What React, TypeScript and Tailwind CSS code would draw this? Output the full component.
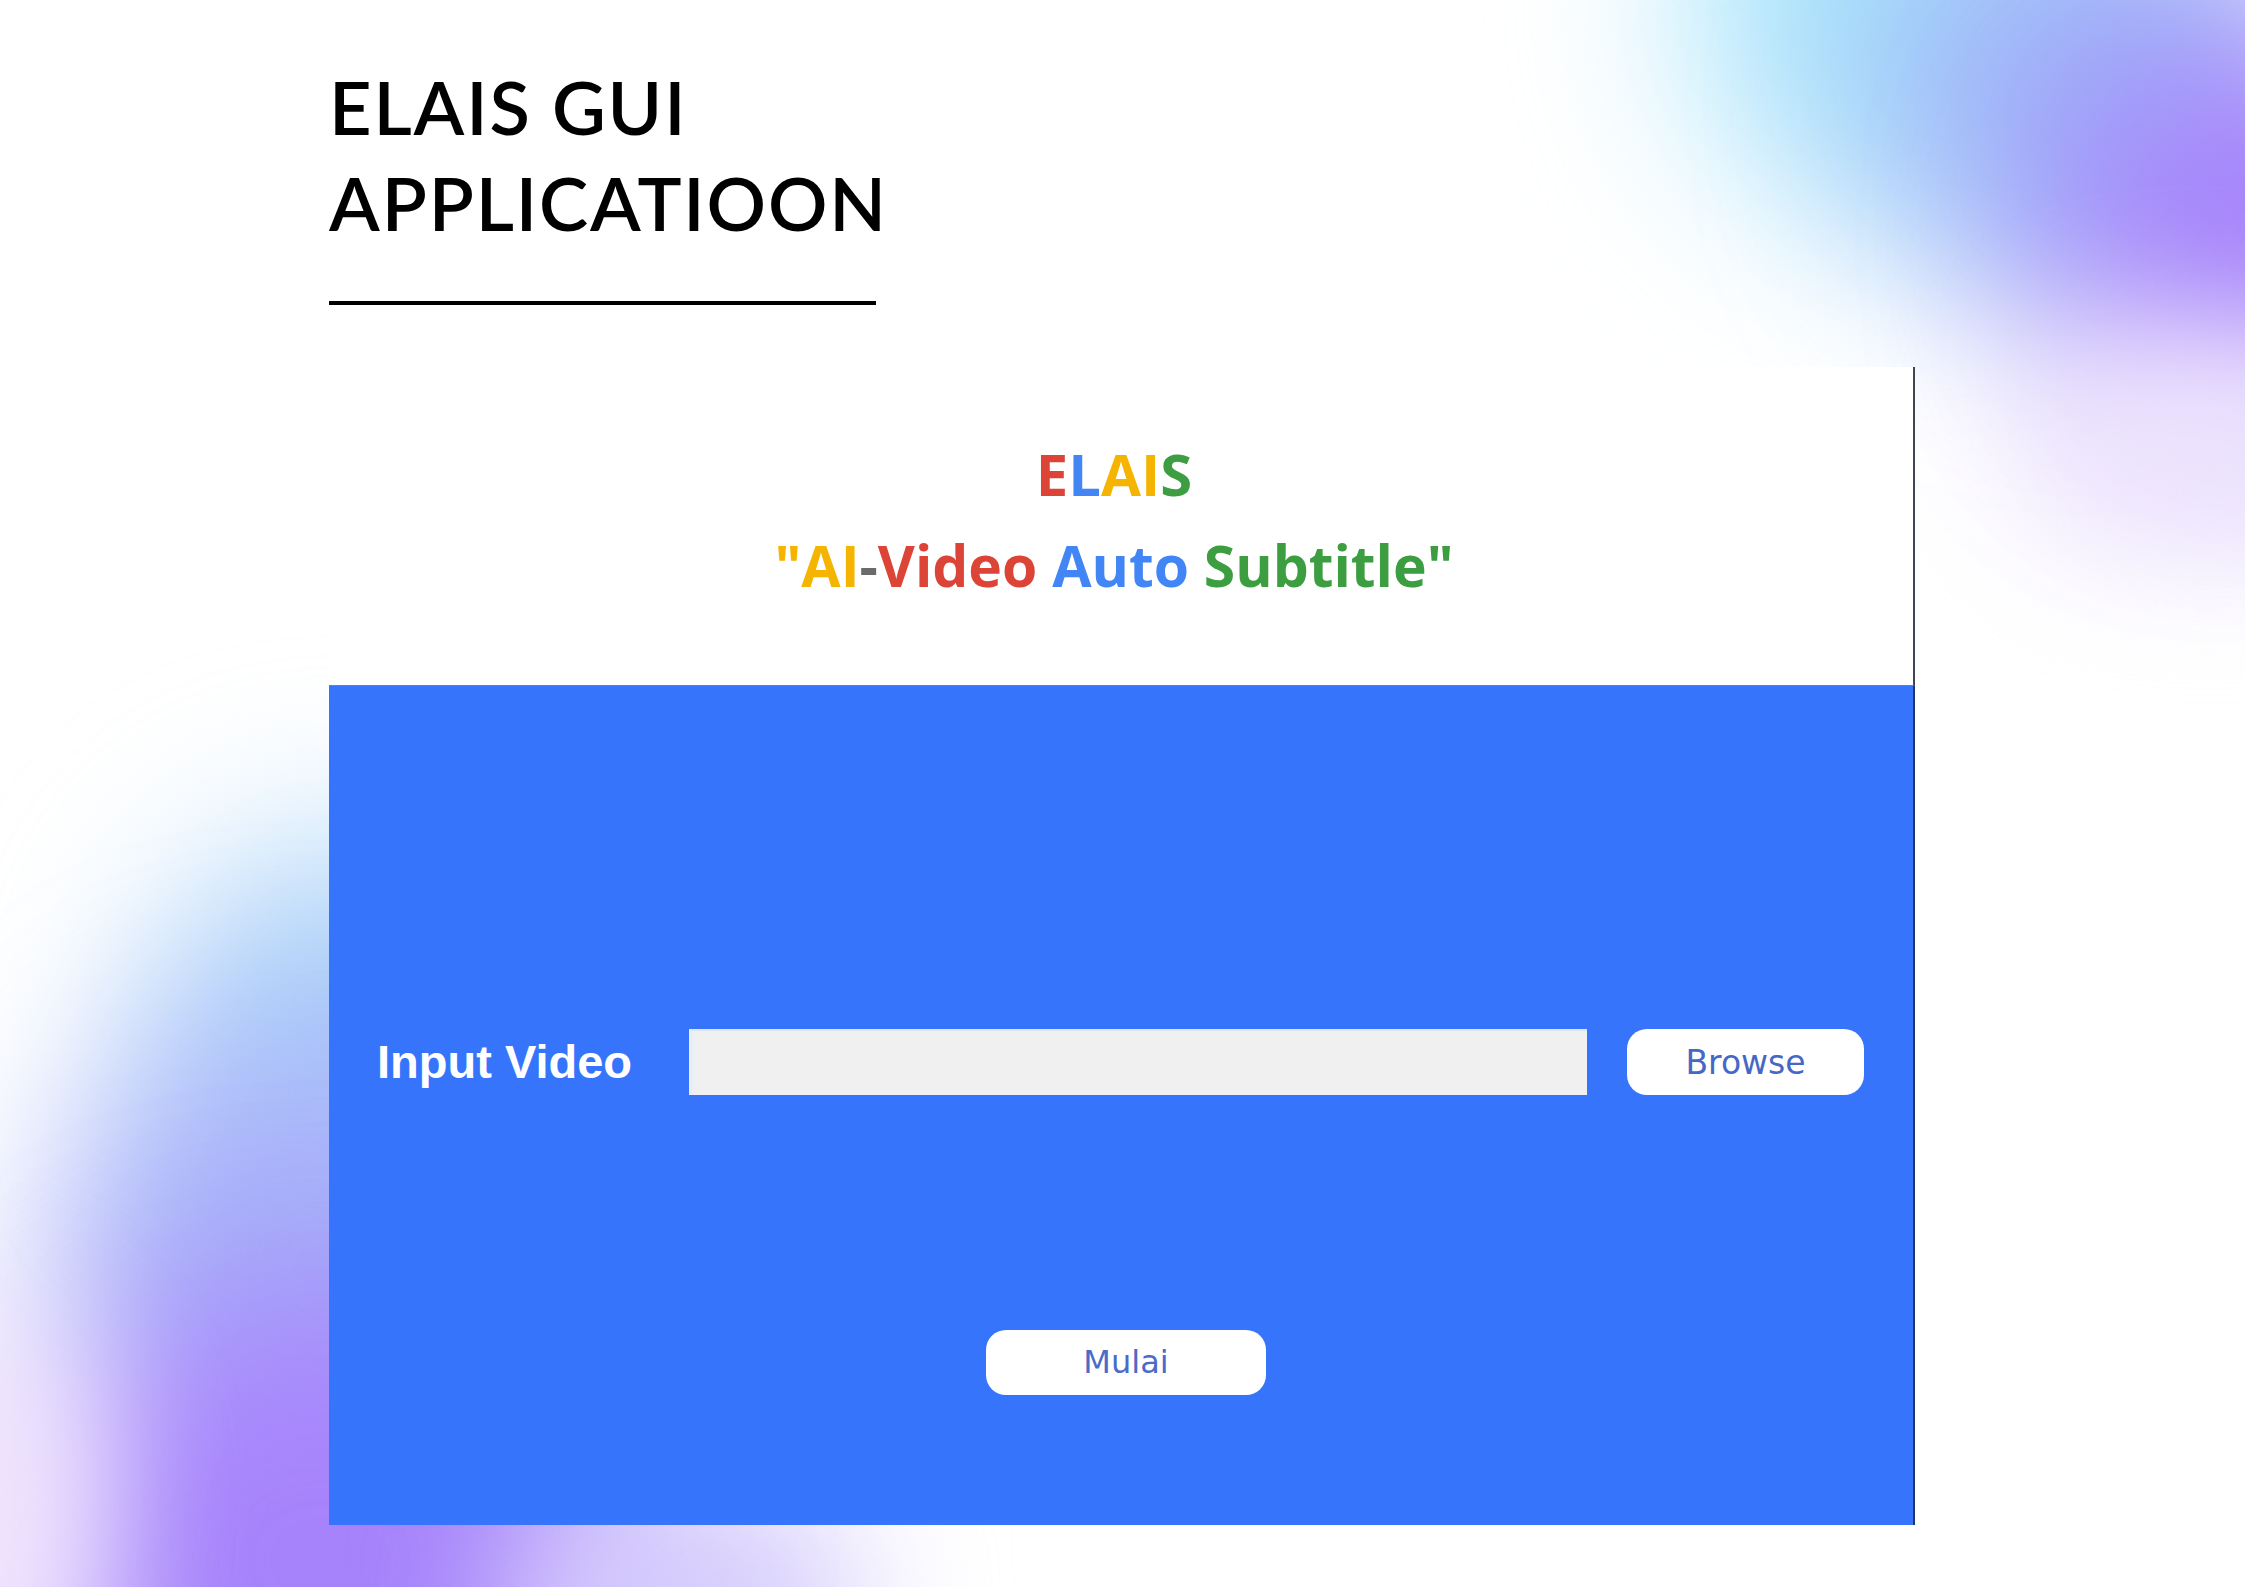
export default function App() {
  return (
    <div className="relative h-[1587px] w-[2245px] overflow-hidden bg-white">
      {/* soft colour blobs behind the page */}
      <div className="pointer-events-none absolute inset-0">
        <div className="absolute left-[1690px] top-[-240px] h-[470px] w-[470px] rounded-full bg-[#a8e4fb] blur-[90px]" />
        <div className="absolute left-[1890px] top-[-110px] h-[420px] w-[420px] rounded-full bg-[#9fb3f8] blur-[90px]" />
        <div className="absolute left-[2060px] top-[40px] h-[400px] w-[400px] rounded-full bg-[#a47ffa] blur-[90px]" />
        <div className="absolute left-[2020px] top-[330px] h-[220px] w-[380px] rounded-full bg-[#ede4fd] blur-[70px]" />

        <div className="absolute left-[150px] top-[840px] h-[400px] w-[400px] rounded-full bg-[#acd4f9] blur-[90px]" />
        <div className="absolute left-[60px] top-[1030px] h-[470px] w-[520px] rounded-full bg-[#a6b1f9] blur-[90px]" />
        <div className="absolute left-[30px] top-[1290px] h-[540px] w-[600px] rounded-full bg-[#a683fb] blur-[90px]" />
        <div className="absolute left-[-260px] top-[1300px] h-[420px] w-[360px] rounded-full bg-[#efe4fd] blur-[70px]" />
        <div className="absolute left-[500px] top-[1500px] h-[200px] w-[360px] rounded-full bg-[#d2c8fc] blur-[70px]" />
      </div>

      <div className="relative pl-[329px] pt-[59px]">
        <h1 className="font-['Lato',sans-serif] text-[74px] font-semibold leading-[96px] tracking-[0.025em] text-black">
          ELAIS GUI
          <br />
          APPLICATIOON
        </h1>
        <div className="mt-[50px] h-[4px] w-[547px] bg-black" />

        {/* app window */}
        <div className="mt-[62px] w-[1586px]">
          <div className="h-[318px] border-r-2 border-[#3d4652] bg-white pt-[72px] pr-[14px] text-center font-['Open_Sans',sans-serif] font-bold">
            <p className="text-[58px] leading-[70px]">
              <span className="text-[#db4437]">E</span>
              <span className="text-[#4285f4]">L</span>
              <span className="text-[#f4b400]">AI</span>
              <span className="text-[#3c9e40]">S</span>
            </p>
            <p className="mt-[16px] text-[57px] leading-[80px]">
              <span className="text-[#f4b400]">"AI</span>
              <span className="text-[#6b6b6b]">-</span>
              <span className="text-[#db4437]">Video </span>
              <span className="text-[#4285f4]">Auto </span>
              <span className="text-[#3c9e40]">Subtitle"</span>
            </p>
          </div>

          <div className="h-[840px] border-t border-r-2 border-t-[#5b7fd6] border-r-[#23346e] bg-[#3675fb] pt-[341px]">
            <div className="flex items-center pl-[48px]">
              <span className="w-[312px] font-['Liberation_Sans',sans-serif] text-[47px] font-bold text-white">
                Input Video
              </span>
              <input
                type="text"
                className="h-[66px] w-[898px] border-t-2 border-l-4 border-t-[#dfe6f5] border-l-[#e9edf6] bg-[#f0f0f0] outline-none"
              />
              <button className="ml-[40px] h-[66px] w-[237px] rounded-[20px] bg-white font-['DejaVu_Sans',sans-serif] text-[33px] text-[#4568c6]">
                Browse
              </button>
            </div>

            <div className="mt-[232px] flex justify-center pl-[10px]">
              <button className="h-[65px] w-[280px] rounded-[20px] bg-white font-['DejaVu_Sans',sans-serif] text-[32px] text-[#4a6cc8]">
                Mulai
              </button>
            </div>
          </div>
        </div>
      </div>
    </div>
  )
}
